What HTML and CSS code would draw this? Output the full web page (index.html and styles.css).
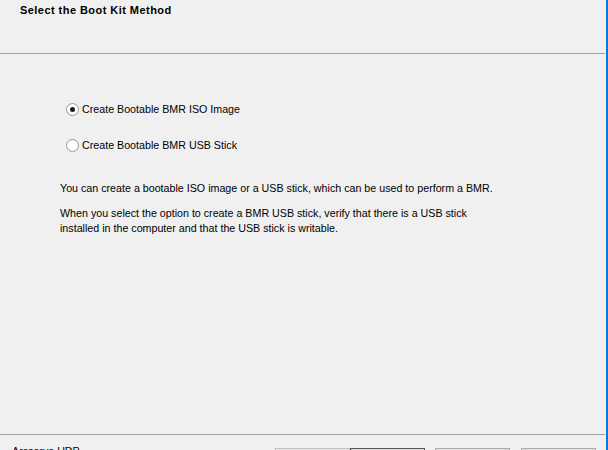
FILE: index.html
```html
<!DOCTYPE html>
<html lang="en">

<head>
    <meta charset="UTF-8">
    <title>Create Boot Kit</title>
    <link rel="stylesheet" href="styles.css">
</head>

<body>
    <div class="wizard">
        <div class="header">Select the Boot Kit Method</div>
        <div class="content">
            <div class="options">
                <label class="option">
                    <span class="radio checked"></span>
                    Create Bootable BMR ISO Image
                </label>
                <label class="option">
                    <span class="radio"></span>
                    Create Bootable BMR USB Stick
                </label>
            </div>
            <p>You can create a bootable ISO image or a USB stick, which can be used to perform a BMR.</p>
            <p>When you select the option to create a BMR USB stick, verify that there is a USB stick<br>
                installed in the computer and that the USB stick is writable.</p>
        </div>
        <div class="footer">
            <div class="brand">Arcserve UDP</div>
            <div class="buttons">
                <button type="button" class="disabled">&lt; Back</button>
                <button type="button" class="default">Next &gt;</button>
                <button type="button" class="spaced">Finish</button>
                <button type="button" class="spaced-last">Cancel</button>
            </div>
        </div>
    </div>
</body>

</html>
```

FILE: styles.css
```css
html,
body {
    margin: 0;
    padding: 0;
    overflow: hidden;
    background: #f0f0f0;
}

body {
    font-family: "Liberation Sans", Arial, sans-serif;
    font-size: 10.7px;
    color: #000;
}

.wizard {
    width: 606px;
    height: 480px;
    border-right: 2px solid #0a78d7;
    display: flex;
    flex-direction: column;
}

.header {
    box-sizing: border-box;
    height: 54px;
    padding: 4px 20px 0;
    font-size: 11px;
    font-weight: bold;
    letter-spacing: 0.45px;
    line-height: 13px;
    border-bottom: 1px solid #a0a0a0;
    margin-right: 1px;
}

.content {
    flex: 1;
    padding: 48px 0 0 60px;
    line-height: 15px;
}

.options {
    padding-left: 6px;
}

.option {
    display: flex;
    align-items: center;
    height: 15px;
    margin-bottom: 21px;
}

.radio {
    box-sizing: border-box;
    width: 13px;
    height: 13px;
    margin-right: 3px;
    border: 1px solid #9a9a9a;
    border-radius: 50%;
    background: radial-gradient(circle, #ffffff 55%, #e6e6e6 100%);
    display: flex;
    align-items: center;
    justify-content: center;
}

.radio.checked::after {
    content: "";
    width: 5px;
    height: 5px;
    border-radius: 50%;
    background: #1a1a1a;
}

p {
    margin: 10px 0 0;
}

.options + p {
    margin-top: 28px;
}

.footer {
    box-sizing: border-box;
    height: 46px;
    border-top: 1px solid #a0a0a0;
    margin-right: 1px;
    display: flex;
    align-items: flex-start;
    padding: 9px 9px 0 12px;
}

.brand {
    line-height: 15px;
}

.buttons {
    margin-left: auto;
    margin-top: 4px;
    display: flex;
}

button {
    box-sizing: border-box;
    width: 75px;
    height: 23px;
    font-family: inherit;
    font-size: 11px;
    background: #e1e1e1;
    border: 1px solid #adadad;
    padding: 0;
}

button.disabled {
    background: #ececec;
    border-color: #bfbfbf;
    color: #a0a0a0;
}

button.default {
    border-color: #555;
}

button.spaced {
    margin-left: 10px;
}

button.spaced-last {
    margin-left: 11px;
}
```
